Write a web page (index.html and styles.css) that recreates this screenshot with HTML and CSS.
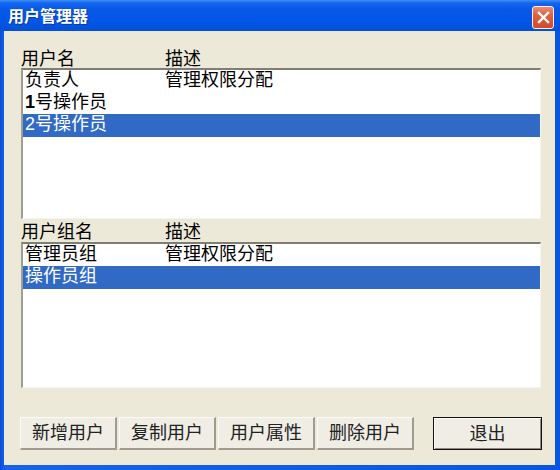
FILE: index.html
```html
<!DOCTYPE html>
<html lang="zh-CN">
<head>
<meta charset="utf-8">
<title>用户管理器</title>
<link rel="stylesheet" href="styles.css">
</head>
<body>
<div class="window">
  <div class="titlebar">
    <span class="title">用户管理器</span>
    <span class="close">
      <svg width="13" height="13" viewBox="0 0 13 13"><path d="M2 2 L11 11 M11 2 L2 11" stroke="#fff" stroke-width="2.4" stroke-linecap="square"/></svg>
    </span>
  </div>
  <div class="client">
    <div class="hdr hdr1"><span class="c1">用户名</span><span class="c2">描述</span></div>
    <div class="list list1">
      <div class="row"><span class="c1">负责人</span><span class="c2">管理权限分配</span></div>
      <div class="row"><span class="c1"><b class="num">1</b>号操作员</span><span class="c2"></span></div>
      <div class="row sel"><span class="c1">2号操作员</span><span class="c2"></span></div>
    </div>
    <div class="hdr hdr2"><span class="c1">用户组名</span><span class="c2">描述</span></div>
    <div class="list list2">
      <div class="row"><span class="c1">管理员组</span><span class="c2">管理权限分配</span></div>
      <div class="row sel"><span class="c1">操作员组</span><span class="c2"></span></div>
    </div>
    <div class="buttons">
      <button class="btn">新增用户</button>
      <button class="btn">复制用户</button>
      <button class="btn">用户属性</button>
      <button class="btn">删除用户</button>
      <button class="btn btn-default">退出</button>
    </div>
  </div>
</div>
</body>
</html>
```

FILE: styles.css
```css
* { box-sizing: border-box; }
html, body { margin: 0; padding: 0; }
body {
  width: 560px;
  height: 470px;
  overflow: hidden;
  font-family: "Liberation Sans", "Noto Sans CJK SC", sans-serif;
  background: #fff;
}
.window {
  width: 560px;
  height: 470px;
  display: flex;
  flex-direction: column;
  background: linear-gradient(90deg, #0a4fd6 0%, #1663ea 1%, #0856e0 100%);
  padding: 0 5px 5px 4px;
}
.titlebar {
  height: 31px;
  margin: 0 -5px 0 -4px;
  padding: 0 4px 0 8px;
  display: flex;
  align-items: center;
  background: linear-gradient(180deg, #3f8ef6 0%, #1466ee 10%, #0758e6 30%, #0256e6 70%, #0450d8 100%);
}
.title {
  color: #fff;
  font-weight: bold;
  font-size: 16px;
  line-height: 20px;
  text-shadow: 1px 1px 0 #0a3aa0;
  margin-top: 2px;
}
.close {
  margin-left: auto;
  margin-right: 2px;
  margin-top: 4px;
  width: 22px;
  height: 23px;
  border: 1px solid #f4f0ee;
  border-radius: 3px;
  background: linear-gradient(180deg, #e98b70 0%, #e0603f 40%, #d24a28 100%);
  display: flex;
  align-items: center;
  justify-content: center;
}
.close svg { display: block; }
.client {
  flex: 1;
  background: #ece9d8;
  padding: 19px 14px 0 17px;
  display: flex;
  flex-direction: column;
  font-size: 18px;
  color: #000;
}
.hdr {
  display: flex;
  line-height: 18px;
  height: 18px;
}
.hdr .c1 { width: 144px; padding-left: 0; }
.hdr2 { height: 23px; align-items: flex-end; padding-bottom: 1px; }
.list {
  background: #fff;
  border-style: solid;
  border-width: 2px 1px 1px 2px;
  border-color: #7f7d74 #f5f4ee #f5f4ee #a09d92;
  padding: 0;
}
.list1 { height: 151px; }
.list2 { height: 146px; }
.row {
  display: flex;
  height: 22px;
  line-height: 21px;
  white-space: nowrap;
}
.row .c1 { width: 142px; padding-left: 2px; }
.num { font-weight: bold; }
.row.sel { background: #316ac5; color: #fff; height: 23px; }
.buttons {
  display: flex;
  gap: 2px;
  margin-top: 29px;
  margin-left: -1px;
  margin-right: -1px;
}
.btn {
  width: 97px;
  height: 33px;
  font-family: "Liberation Sans", "Noto Sans CJK SC", sans-serif;
  font-size: 18px;
  color: #222;
  background: #efede4;
  border-style: solid;
  border-width: 1px 2px 2px 1px;
  border-color: #fbfaf6 #9e9b90 #9e9b90 #fbfaf6;
  padding: 0;
  line-height: 30px;
}
.btn-default {
  width: 109px;
  margin-left: auto;
  border: 1px solid #111;
  box-shadow: inset 1px 1px 0 #fbfaf6, inset -1px -1px 0 #8e8b80;
}
```
